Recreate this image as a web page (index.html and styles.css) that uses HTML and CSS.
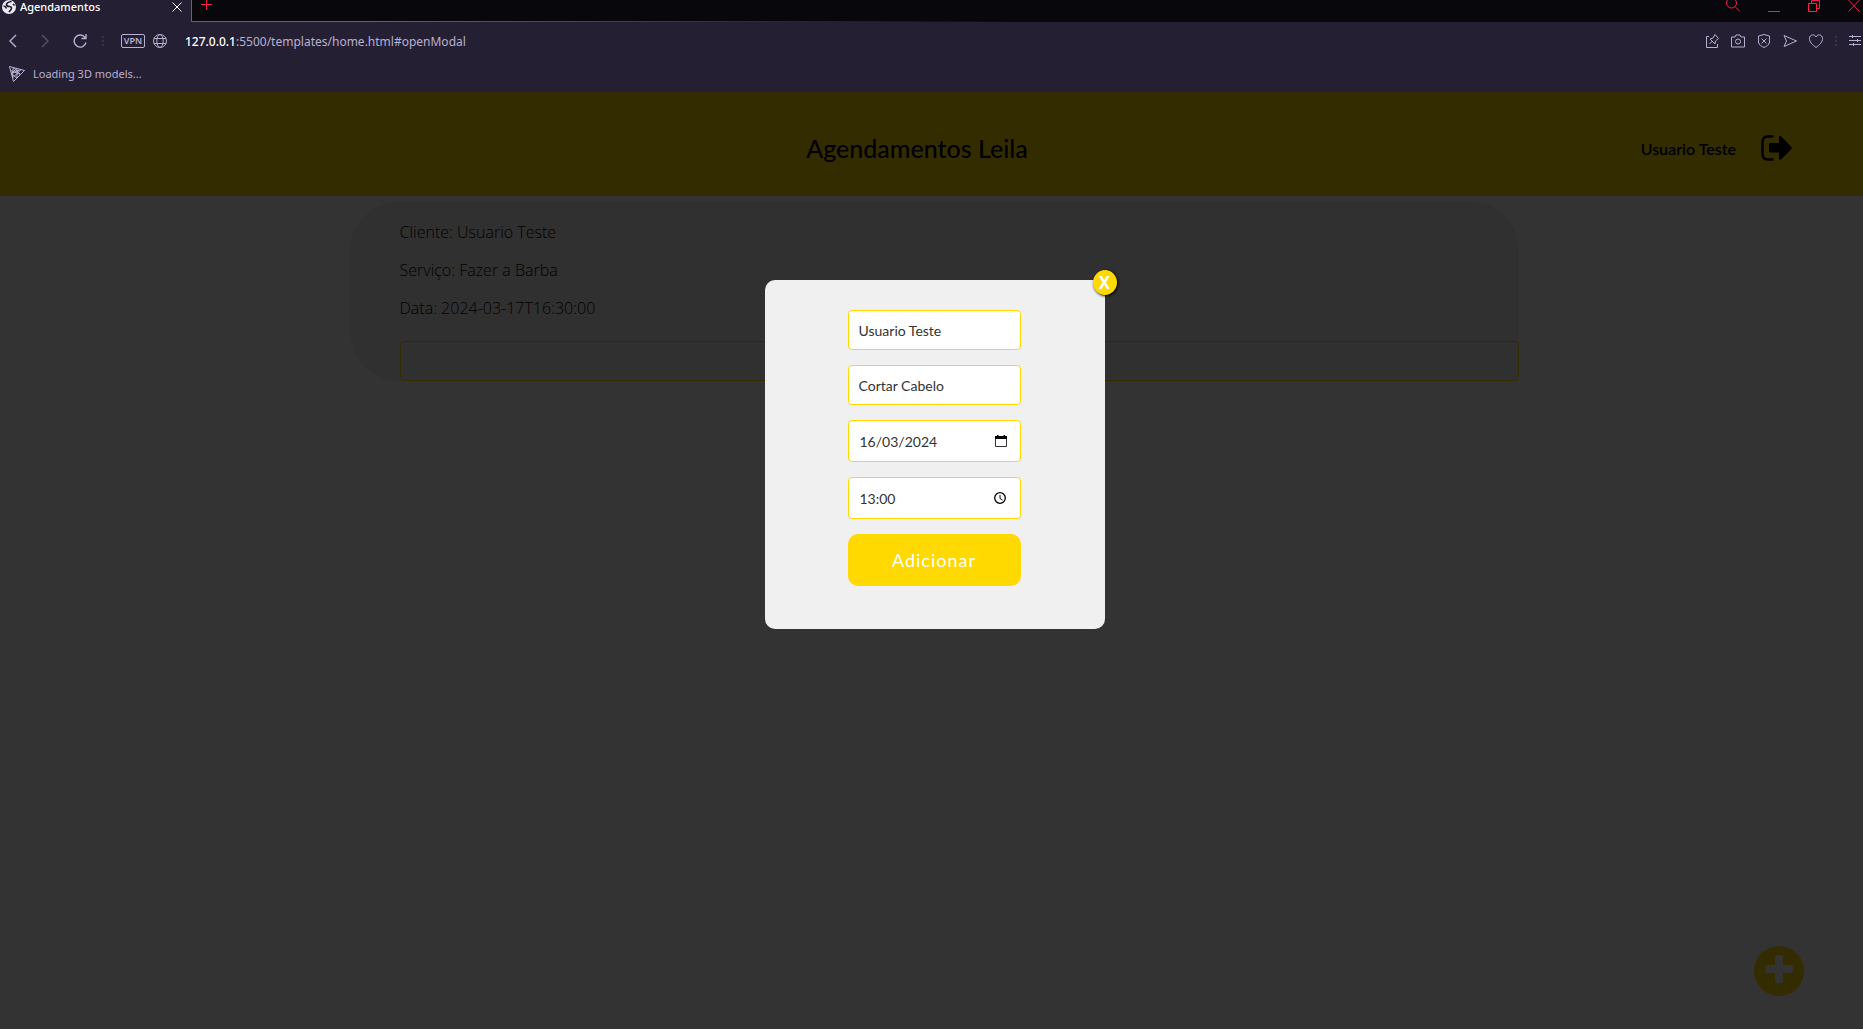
FILE: index.html
```html
<!DOCTYPE html>
<html lang="pt-BR">
<head>
<meta charset="utf-8">
<title>Agendamentos</title>
<link rel="stylesheet" href="styles.css">
</head>
<body>
<div class="browser">
  <div class="tabs">
    <div class="tab">
      <svg class="favicon" viewBox="0 0 14 14"><circle cx="7" cy="7" r="7" fill="#eceaf2"/><path d="M9.500 1.500Q5 2 4.500 4.500q0 2 3 2 3 .5 1.500 3L7 12M1.500 6q2 0 3 2.500M11 4l1.500 1.500" fill="none" stroke="#251f33" stroke-width="1.700"/></svg>
      <span class="tab-title">Agendamentos</span>
      <button class="icon-btn" aria-label="Fechar aba"><svg width="10" height="10" viewBox="0 0 10 10"><path d="M.5.5l9 9M9.500.5l-9 9"/></svg></button>
    </div>
    <div class="strip">
      <button class="icon-btn" aria-label="Nova aba"><svg width="11" height="11" viewBox="0 0 11 11"><path d="M5.500 0v10M0 4.500h11"/></svg></button>
      <div class="window-actions">
        <button class="icon-btn" aria-label="Buscar"><svg width="14" height="14" viewBox="0 0 14 14"><circle cx="5.500" cy="3" r="5"/><path d="M9 6.500l5 5"/></svg></button>
        <button class="icon-btn" aria-label="Minimizar"><svg width="12" height="14" viewBox="0 0 12 14"><path d="M0 11.500h12"/></svg></button>
        <button class="icon-btn" aria-label="Restaurar"><svg width="12" height="14" viewBox="0 0 12 14"><path d="M.5 3.500h8v8h-8zM3.500 3V.5h8v8H9"/></svg></button>
        <button class="icon-btn" aria-label="Fechar"><svg width="12" height="14" viewBox="0 0 12 14"><path d="M.5 0l11 11.500M11.500 0L.5 11.500"/></svg></button>
      </div>
    </div>
  </div>
  <div class="toolbar">
    <div class="nav">
      <button class="icon-btn" aria-label="Voltar"><svg width="8" height="14" viewBox="0 0 8 14"><path d="M7 1L1 7l6 6" stroke-width="1.400"/></svg></button>
      <button class="icon-btn dim" aria-label="Avançar"><svg width="8" height="14" viewBox="0 0 8 14"><path d="M1 1l6 6-6 6" stroke-width="1.400"/></svg></button>
      <button class="icon-btn" aria-label="Recarregar"><svg width="14" height="14" viewBox="0 0 14 14"><path d="M12 3.500A6 6 0 1 0 13 8.500M13 0V4.500H8.500" stroke-width="1.400"/></svg></button>
      <span class="dots"></span>
    </div>
    <span class="vpn">VPN</span>
    <svg class="globe" width="14" height="14" viewBox="0 0 14 14"><circle cx="7" cy="7" r="6.500"/><ellipse cx="7" cy="7" rx="3.200" ry="6.500"/><path d="M1 4.500h12M1 9.500h12"/></svg>
    <span class="url"><b>127.0.0.1</b>:5500/templates/home.html#openModal</span>
    <div class="tools">
      <button class="icon-btn" aria-label="Fixar"><svg width="14" height="14" viewBox="0 0 14 14"><path d="M4 2.500H1.500v11h11V10M4.500 10l3-3M5 5l5 5 .5-3 3-2.500L10 .5 8 4z"/></svg></button>
      <button class="icon-btn" aria-label="Captura"><svg width="14" height="14" viewBox="0 0 14 14"><path d="M.5 3H4l1-2h4l1 2h3.500v10H.5z"/><circle cx="7" cy="7.500" r="2.500"/></svg></button>
      <button class="icon-btn" aria-label="Bloqueador"><svg width="14" height="14" viewBox="0 0 14 14"><path d="M7 .5l5.500 1.500v6C12.500 11 9 12.500 7 13.500 5 12.500 1.500 11 1.500 8V2zM4.500 4.500l5 5M9.500 4.500l-5 5"/></svg></button>
      <button class="icon-btn" aria-label="Enviar"><svg width="14" height="14" viewBox="0 0 14 14"><path d="M1 1.500L13.500 7 1 12.500 3.500 7z"/></svg></button>
      <button class="icon-btn" aria-label="Favoritar"><svg width="14" height="14" viewBox="0 0 14 14"><path d="M7 13.500C3 10.500.5 8 .5 4.500.5 0 6 0 7 3 8 0 13.500 0 13.500 4.500 13.500 8 11 10.500 7 13.500z"/></svg></button>
      <span class="dots"></span>
      <button class="icon-btn" aria-label="Configurações"><svg width="12" height="14" viewBox="0 0 12 14"><path d="M0 2.500h12M0 6.500h12M0 10.500h12M3.500 1v3M8.500 5v3M4.500 9v3"/></svg></button>
    </div>
  </div>
  <a class="bookmark" href="#openModal">
    <svg width="16" height="16" viewBox="0 0 16 16"><path d="M.5.5l15 4L4.500 15.500zM4.200 1.500l7.300 7M8 2.500L2 7.500l10-4M1.500 4.500l10 4M3.500 12L12 3.500M3.500 12L4.200 1.500M8 2.500v9.500L2 7.500"/></svg>
    Loading 3D models...
  </a>
</div>

<div class="page">
  <header class="header">
    <h1>Agendamentos Leila</h1>
    <div class="user">
      <span>Usuario Teste</span>
      <button class="icon-btn" aria-label="Sair"><svg width="31" height="26" viewBox="0 0 31 26"><path d="M12.500 1.500H7Q1.500 1.500 1.500 7v12q0 5.500 5.500 5.500h5.500" fill="none" stroke="#000" stroke-width="2.500"/><path d="M9 8h9V2q0-2 2-.7l10.500 10.700q.7 1 0 2L20 24.500q-2 1-2-1V17.500H9q-1 0-1-1V9q0-1 1-1z" fill="#000"/></svg></button>
    </div>
  </header>
  <main class="main">
    <article class="card">
      <p>Cliente: Usuario Teste</p>
      <p>Serviço: Fazer a Barba</p>
      <p>Data: 2024-03-17T16:30:00</p>
      <div class="box"></div>
    </article>
  </main>
  <button class="fab" aria-label="Novo agendamento"><svg width="28" height="28" viewBox="0 0 28 28"><path d="M12 0h4q2 0 2 2v8H26q2 0 2 2v4q0 2-2 2h-8v8q0 2-2 2h-4q-2 0-2-2v-8H2q-2 0-2-2v-4q0-2 2-2h8V2q0-2 2-2z" fill="#fff"/></svg></button>
  <div class="overlay">
    <form class="modal" id="openModal">
      <button type="button" class="close" aria-label="Fechar">X</button>
      <input class="field" type="text" value="Usuario Teste" aria-label="Cliente">
      <select class="field" aria-label="Serviço"><option>Cortar Cabelo</option></select>
      <label class="field picker"><input type="text" value="16/03/2024" aria-label="Data"><svg width="12" height="12" viewBox="0 0 12 12"><path d="M.5 2h11v9.500H.5z" fill="none" stroke="#333"/><path d="M0 1h12v3H0zM2 0h1.500v2H2zM8.500 0H10v2H8.500z"/></svg></label>
      <label class="field picker"><input type="text" value="13:00" aria-label="Hora"><svg width="13" height="12" viewBox="0 0 13 12"><circle cx="6" cy="6" r="5.300" fill="none" stroke="#000" stroke-width="1.300"/><path d="M6 3v3.500l2.500 1.500" fill="none" stroke="#000"/></svg></label>
      <button type="button" class="submit">Adicionar</button>
    </form>
  </div>
</div>
</body>
</html>
```
FILE: styles.css
```css
* { box-sizing: border-box; }
body {
  margin: 0;
  min-height: 100vh;
  display: flex;
  flex-direction: column;
  font-family: Lato, sans-serif;
  overflow: hidden;
}
button { font: inherit; border: 0; padding: 0; cursor: pointer; }
.icon-btn { display: flex; background: none; color: inherit; }

/* browser bars */
.browser {
  background: #251f33;
  color: #b9b0d0;
  font-family: "Noto Sans", sans-serif;
  font-size: 11px;
}
.browser svg { fill: none; stroke: currentColor; }
.tabs { display: flex; height: 22px; }
.tab {
  width: 191px;
  padding: 0 9px 8px 2px;
  display: flex;
  align-items: center;
  gap: 4px;
  color: #fff;
}
.browser .favicon { width: 14px; height: 14px; stroke: none; }
.tab-title { flex: 1; line-height: 14px; font-weight: 500; }
.strip {
  flex: 1;
  display: flex;
  justify-content: space-between;
  padding: 0 3px 0 9px;
  border-left: 1px solid #fa1e4e;
  background: linear-gradient(90deg, #fa1e4e 10%, #08070c 50%) bottom / 100% 1px no-repeat #08070c;
  color: #fa1e4e;
}
.window-actions { display: flex; align-items: flex-start; gap: 28px; }
.toolbar { display: flex; align-items: center; height: 38px; padding: 0 2px 0 9px; }
.nav { display: flex; gap: 24px; align-items: center; }
.nav .dots { margin-left: -9px; }
.dim { opacity: .35; }
.vpn {
  width: 24px;
  margin-left: 17px;
  border: 1px solid currentColor;
  border-radius: 2px;
  font-size: 9px;
  font-weight: 600;
  line-height: 12px;
  text-align: center;
}
.globe { margin-left: 8px; }
.url { margin-left: 18px; font-size: 12px; flex: 1; }
.url b { color: #fff; font-weight: 500; }
.tools { display: flex; align-items: center; gap: 12px; }
.dots { width: 2px; height: 10px; border-left: 2px dotted #3b334d; }
.bookmark {
  display: flex;
  align-items: center;
  gap: 8px;
  height: 32px;
  padding: 0 9px 5px;
  color: inherit;
  text-decoration: none;
}

/* page */
.page {
  flex: 1;
  position: relative;
  background: #fff;
}
.header {
  display: grid;
  grid-template-columns: 1fr auto 1fr;
  align-items: center;
  height: 104px;
  padding: 8px 71px 0 42px;
  background: #ffd900;
}
.header h1 { grid-column: 2; margin: 0; font-size: 25px; font-weight: 500; }
.user { display: flex; justify-content: flex-end; align-items: center; gap: 25px; font-size: 16px; font-weight: 600; }
.main { padding: 5px 0 0 6px; }
.card {
  width: 63%;
  margin: 0 auto;
  padding: 19px 0 0 50px;
  border-radius: 50px;
  background: #efefef;
  font-family: "Open Sans", sans-serif;
  font-size: 16px;
  font-weight: 300;
}
.card p { margin: 0 0 14px; line-height: 24px; }
.box {
  height: 40px;
  margin-top: 21px;
  border: 1px solid #ffd900;
  border-radius: 4px;
  background: #efefef;
}
.fab {
  position: absolute;
  right: 59px;
  bottom: 33px;
  width: 50px;
  height: 50px;
  display: grid;
  place-items: center;
  padding-bottom: 4px;
  border-radius: 50%;
  background: #ffd900;
}
.overlay {
  position: absolute;
  inset: 0;
  padding: 188px 0 0 6px;
  background: rgba(0, 0, 0, .8);
}
.modal {
  position: relative;
  width: 340px;
  margin: 0 auto;
  padding: 30px 84px 43px 83px;
  display: flex;
  flex-direction: column;
  gap: 15px;
  border-radius: 10px;
  background: #f0f0f0;
}
.close {
  position: absolute;
  top: -10px;
  right: -12px;
  width: 24px;
  height: 25px;
  border-radius: 50%;
  background: #ffd900;
  box-shadow: 1px 1px 3px #000;
  color: #fff;
  font: bold 17px/24px "Noto Sans", sans-serif;
}
.field {
  width: 100%;
  height: 40px;
  padding: 0 10px;
  border: 1px solid #ffd900;
  border-radius: 4px;
  background: #fff;
  color: #333;
  font: 14px Lato, sans-serif;
  appearance: none;
}
.picker { display: flex; align-items: center; height: 42px; padding: 0 13px 0 11px; }
.picker input { flex: 1; min-width: 0; border: 0; padding: 0; font: inherit; color: inherit; background: none; }
.submit {
  height: 52px;
  border-radius: 10px;
  background: #ffd900;
  color: #fff;
  font-size: 18px;
  letter-spacing: 1px;
}
```
